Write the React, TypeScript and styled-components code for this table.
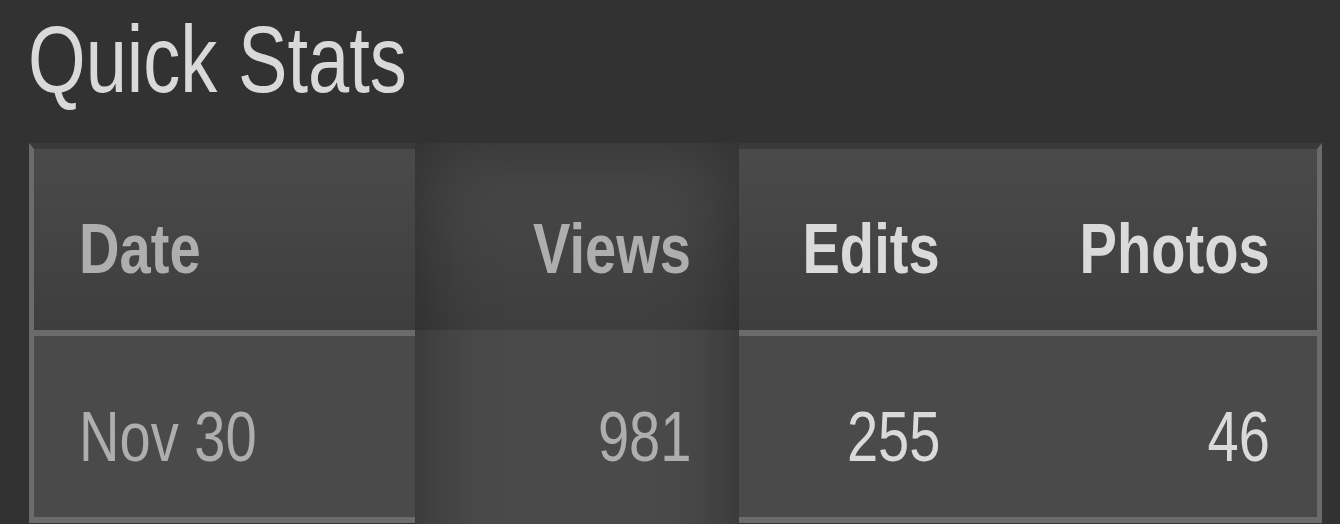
import React from 'react'
import styled, { createGlobalStyle, css } from 'styled-components'

const GlobalStyle = createGlobalStyle`
  html, body {
    margin: 0;
    height: 100%;
    overflow: hidden;
    background: #323232;
  }
  body {
    font-family: "Liberation Sans", Arial, sans-serif;
  }
`

const Panel = styled.section`
  padding: 12px 0 0 29px;
`

const Narrow = styled.span<{ $from?: 'left' | 'right'; $scale?: number }>`
  display: inline-block;
  transform: scaleX(${p => p.$scale ?? 0.79});
  transform-origin: ${p => p.$from ?? 'left'} center;
`

const Title = styled.h1`
  margin: 0 0 36px -1px;
  font-size: 95px;
  line-height: 95px;
  font-weight: 400;
  color: #d9d9d9;
  white-space: nowrap;
`

const Board = styled.div`
  display: grid;
  grid-template-columns: 386px 324px 248px 335px;
  grid-template-rows: 193px 187px;
`

type Tone = 'dim' | 'bright'

const Cell = styled.div<{ $head?: boolean; $right?: boolean; $tone: Tone; $edge?: 'left' | 'right' }>`
  box-sizing: border-box;
  padding: ${p => (p.$head ? '64px' : '65px')} 47px 0 ${p => (p.$right ? '0' : '45px')};
  border-bottom: 6px solid #6b6b6b;
  font-size: 71px;
  line-height: 71px;
  font-weight: ${p => (p.$head ? 700 : 400)};
  color: ${p => (p.$tone === 'dim' ? '#aeaeae' : '#dadada')};
  text-align: ${p => (p.$right ? 'right' : 'left')};
  white-space: nowrap;
  background: ${p => (p.$head ? 'linear-gradient(#4a4a4a, #3e3e3e)' : '#4a4a4a')};
  ${p => p.$head && css`border-top: 6px solid #3a3a3a;`}
  ${p => p.$edge === 'left' && css`border-left: 5px solid #6b6b6b;`}
  ${p => p.$edge === 'right' && css`border-right: 5px solid #6b6b6b;`}
`

const ViewsColumn = styled.div`
  grid-column: 2;
  grid-row: 1 / span 2;
  margin-bottom: -160px;
  display: flex;
  flex-direction: column;
  background: linear-gradient(#4a4a4a 0, #4a4a4a 6px, #3e3e3e 187px, #4a4a4a 187px);
  box-shadow: inset 0 0 80px rgba(0, 0, 0, 0.4);
`

const ViewsCell = styled.div<{ $head?: boolean }>`
  box-sizing: border-box;
  height: ${p => (p.$head ? '187px' : 'auto')};
  flex: ${p => (p.$head ? 'none' : '1')};
  padding: ${p => (p.$head ? '70px' : '71px')} 48px 0 0;
  font-size: 71px;
  line-height: 71px;
  font-weight: ${p => (p.$head ? 700 : 400)};
  color: #aeaeae;
  text-align: right;
`

const stats = { date: 'Nov 30', views: 981, edits: 255, photos: 46 }

export default function App() {
  return (
    <>
      <GlobalStyle />
      <Panel>
        <Title><Narrow $scale={0.78}>Quick Stats</Narrow></Title>
        <Board>
          <Cell $head $tone="dim" $edge="left"><Narrow>Date</Narrow></Cell>
          <ViewsColumn>
            <ViewsCell $head><Narrow $from="right">Views</Narrow></ViewsCell>
            <ViewsCell><Narrow $from="right">{stats.views}</Narrow></ViewsCell>
          </ViewsColumn>
          <Cell $head $right $tone="bright"><Narrow $from="right">Edits</Narrow></Cell>
          <Cell $head $right $tone="bright" $edge="right"><Narrow $from="right">Photos</Narrow></Cell>

          <Cell $tone="dim" $edge="left"><Narrow>{stats.date}</Narrow></Cell>
          <Cell $right $tone="bright"><Narrow $from="right">{stats.edits}</Narrow></Cell>
          <Cell $right $tone="bright" $edge="right"><Narrow $from="right">{stats.photos}</Narrow></Cell>
        </Board>
      </Panel>
    </>
  )
}
